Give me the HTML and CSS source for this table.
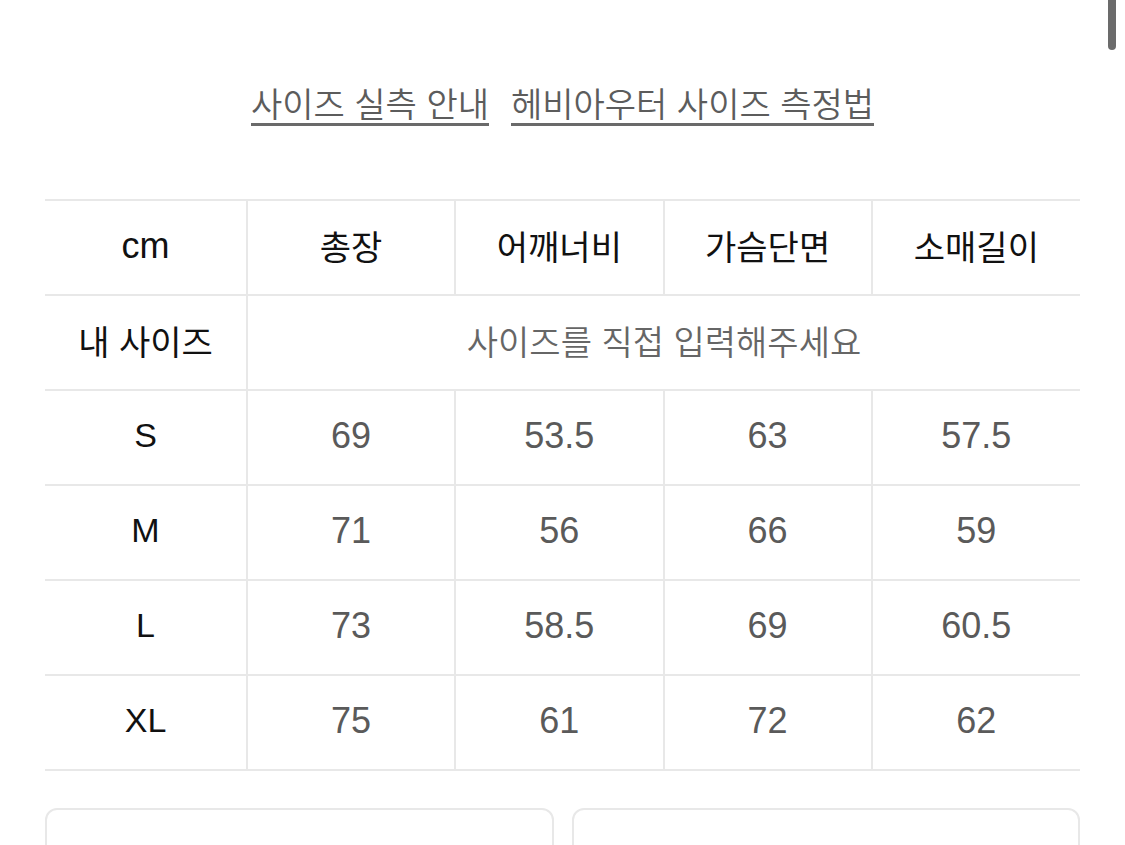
FILE: index.html
```html
<!DOCTYPE html>
<html lang="ko">
<head>
<meta charset="utf-8">
<link rel="stylesheet" href="styles.css">
</head>
<body>
<div class="scrollbar"></div>
<div class="page">
  <nav class="links">
    <a class="link" href="#">사이즈 실측 안내</a>
    <a class="link" href="#">헤비아우터 사이즈 측정법</a>
  </nav>
  <table class="size-table">
    <colgroup>
      <col class="c-first"><col><col><col><col>
    </colgroup>
    <tr class="head">
      <th class="latin cm">cm</th><th>총장</th><th>어깨너비</th><th>가슴단면</th><th>소매길이</th>
    </tr>
    <tr>
      <th>내 사이즈</th><td colspan="4" class="hint">사이즈를 직접 입력해주세요</td>
    </tr>
    <tr><th class="latin">S</th><td>69</td><td>53.5</td><td>63</td><td>57.5</td></tr>
    <tr><th class="latin">M</th><td>71</td><td>56</td><td>66</td><td>59</td></tr>
    <tr><th class="latin">L</th><td>73</td><td>58.5</td><td>69</td><td>60.5</td></tr>
    <tr><th class="latin">XL</th><td>75</td><td>61</td><td>72</td><td>62</td></tr>
  </table>
  <div class="boxes">
    <div class="box"></div>
    <div class="box"></div>
  </div>
</div>
</body>
</html>
```
FILE: styles.css
```css
html, body {
  margin: 0;
  padding: 0;
  background: #ffffff;
}
body {
  font-family: "Liberation Sans", "Noto Sans CJK KR", sans-serif;
  overflow: hidden;
  height: 845px;
}
.page {
  padding: 83px 45px 0 45px;
}
.scrollbar {
  position: absolute;
  left: 1108px;
  top: 0;
  width: 8px;
  height: 50px;
  border-radius: 0 0 4px 4px;
  background: #6b6b6b;
}
.links {
  display: flex;
  justify-content: center;
  gap: 22px;
  height: 116px;
}
.link {
  font-family: "Noto Sans CJK KR", sans-serif;
  font-weight: 350;
  font-size: 34px;
  line-height: 40px;
  height: 40px;
  color: #5c5c5c;
  text-decoration: none;
  border-bottom: 3px solid #6a6a6a;
}
.size-table {
  width: 1035px;
  border-collapse: collapse;
  table-layout: fixed;
}
.c-first {
  width: 202px;
}
.size-table th,
.size-table td {
  height: 89px;
  padding: 0 0 4px 0;
  text-align: center;
  vertical-align: middle;
  border: 2px solid #e8e8e8;
}
.size-table tr > :first-child {
  border-left: none;
}
.size-table tr > :last-child {
  border-right: none;
}
.size-table th {
  color: #111111;
  font-weight: normal;
  font-family: "Noto Sans CJK KR", sans-serif;
  font-size: 34px;
}
.size-table th.latin {
  font-family: "Liberation Sans", "Noto Sans CJK KR", sans-serif;
  font-size: 34px;
}
.size-table th.cm {
  font-size: 36px;
}
.size-table td {
  color: #5a5a5a;
  font-size: 36px;
}
.size-table td.hint {
  font-family: "Noto Sans CJK KR", sans-serif;
  font-weight: 350;
  color: #666666;
  font-size: 34px;
}
.boxes {
  display: flex;
  gap: 18px;
  margin-top: 37px;
}
.box {
  flex: 1;
  height: 60px;
  border: 2px solid #e8e8e8;
  border-radius: 12px;
}
```
